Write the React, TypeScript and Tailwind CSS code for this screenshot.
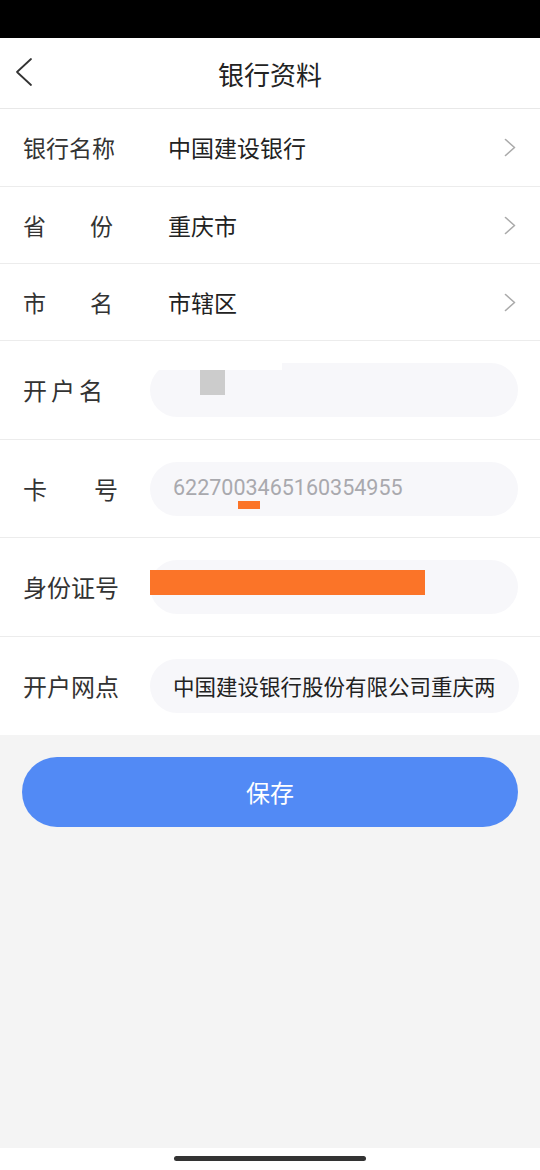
const font = { fontFamily: '"Noto Sans CJK SC", "Noto Sans", sans-serif' };

function Chevron() {
    return (
        <svg width="12" height="19" viewBox="0 0 12 19" fill="none" className="shrink-0">
            <polyline points="1.5,1.5 10.5,9.5 1.5,17.5" stroke="#aaaaaa" strokeWidth="1.6" strokeLinecap="round" strokeLinejoin="round" />
        </svg>
    );
}

function SelectRow({ label, value, h }: { label: React.ReactNode; value: string; h: string }) {
    return (
        <div className={`flex items-center border-b border-[#ececec] pl-[23px] pr-[24px] ${h}`}>
            <div className="w-[145px] shrink-0 text-[23px] text-[#333]">{label}</div>
            <div className="flex-1 text-[23px] text-[#222]">{value}</div>
            <Chevron />
        </div>
    );
}

function InputRow({ label, h, border = true, children }: { label: React.ReactNode; h: string; border?: boolean; children: React.ReactNode }) {
    return (
        <div className={`flex items-center pl-[23px] pr-[22px] ${h} ${border ? 'border-b border-[#ececec]' : ''}`}>
            <div className="w-[127px] shrink-0 text-[24px] text-[#333]">{label}</div>
            <div className="relative flex h-[54px] flex-1 items-center rounded-full bg-[#f7f7fa] px-[23px]">{children}</div>
        </div>
    );
}

function Spread({ a, b, w }: { a: string; b: string; w: string }) {
    return (
        <div className={`flex justify-between ${w}`}>
            <span>{a}</span>
            <span>{b}</span>
        </div>
    );
}

export default function App() {
    return (
        <div className="flex h-[1170px] w-[540px] flex-col bg-white" style={font}>
            <div className="h-[38px] bg-black" />

            <div className="relative flex h-[71px] items-center justify-center border-b border-[#e8e8e8]">
                <svg width="20" height="32" viewBox="0 0 20 32" fill="none" className="absolute left-[14px] top-[18px]">
                    <polyline points="17,3 3,16 17,29" stroke="#333333" strokeWidth="1.8" strokeLinecap="round" strokeLinejoin="round" />
                </svg>
                <h1 className="text-[26px] text-[#222]">银行资料</h1>
            </div>

            <SelectRow label="银行名称" value="中国建设银行" h="h-[78px]" />
            <SelectRow label={<Spread a="省" b="份" w="w-[90px]" />} value="重庆市" h="h-[77px]" />
            <SelectRow label={<Spread a="市" b="名" w="w-[90px]" />} value="市辖区" h="h-[77px]" />

            <InputRow label={<span className="tracking-[4px]">开户名</span>} h="h-[99px]">
                <div className="absolute left-[-4px] top-[-2px] h-[9px] w-[136px] bg-white" />
                <div className="absolute left-[50px] top-[7px] h-[25px] w-[25px] bg-[#cccccc]" />
            </InputRow>

            <InputRow label={<Spread a="卡" b="号" w="w-[95px]" />} h="h-[98px]">
                <span className="text-[21.5px] text-[#a9a9ae]" style={{ fontFamily: 'Roboto, sans-serif' }}>6227003465160354955</span>
                <div className="absolute left-[88px] top-[39px] h-[8px] w-[22px] bg-[#fb7428]" />
            </InputRow>

            <InputRow label="身份证号" h="h-[99px]">
                <div className="absolute left-0 top-[10px] h-[25px] w-[275px] bg-[#fb7428]" />
            </InputRow>

            <InputRow label="开户网点" h="h-[98px]" border={false}>
                <span className="overflow-hidden whitespace-nowrap text-[21.5px] text-[#222]">中国建设银行股份有限公司重庆两</span>
            </InputRow>

            <div className="flex-1 bg-[#f4f4f4] px-[22px] pt-[22px]">
                <button className="flex h-[70px] w-full items-center justify-center rounded-full bg-[#528af5] text-[24px] text-white">
                    保存
                </button>
            </div>

            <div className="flex h-[22px] justify-center bg-white pt-[8px]">
                <div className="h-[5px] w-[192px] rounded-full bg-[#333]" />
            </div>
        </div>
    );
}
